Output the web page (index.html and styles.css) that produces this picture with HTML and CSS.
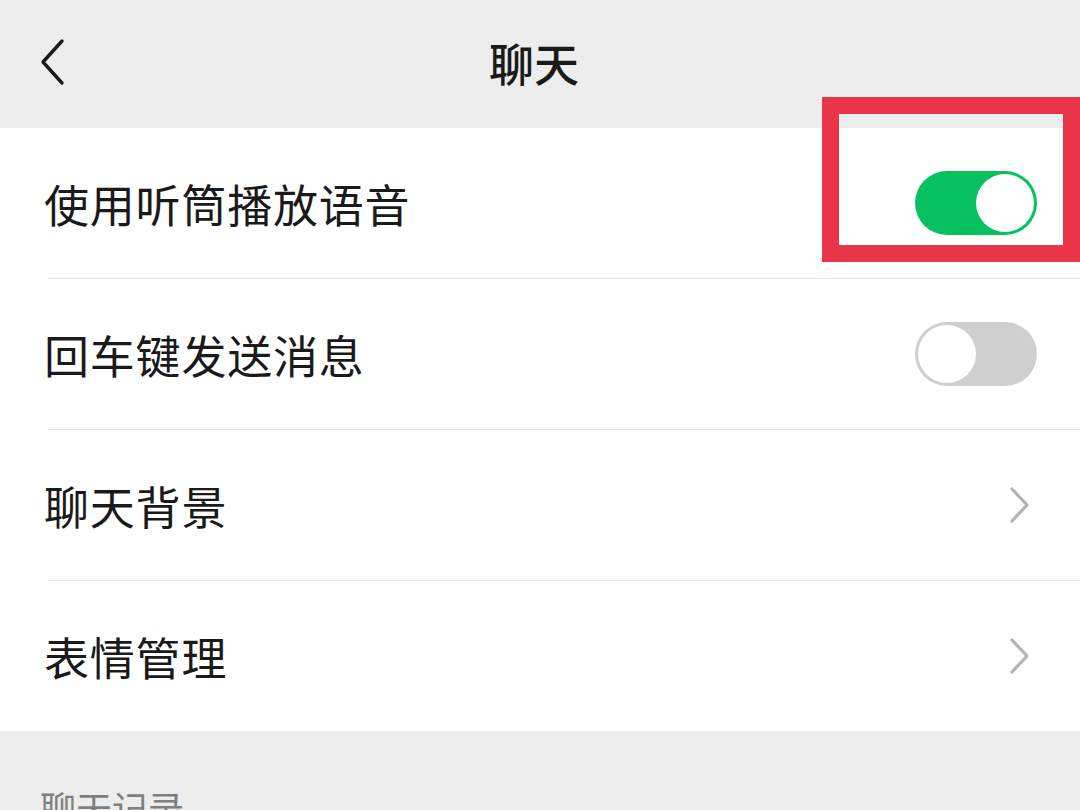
FILE: index.html
```html
<!DOCTYPE html>
<html lang="zh-CN">
<head>
<meta charset="utf-8">
<title>聊天</title>
<link rel="stylesheet" href="styles.css">
</head>
<body>
<div class="page">
  <header class="nav">
    <span class="back">
      <svg width="30" height="48" viewBox="0 0 30 48"><path d="M24 3 L5 24 L24 45" fill="none" stroke="#1a1a1a" stroke-width="3.4" stroke-linecap="round" stroke-linejoin="round"/></svg>
    </span>
    <h1 class="title">聊天</h1>
  </header>
  <ul class="list">
    <li class="row">
      <span class="label">使用听筒播放语音</span>
      <span class="switch on"><span class="knob"></span></span>
    </li>
    <li class="row">
      <span class="label">回车键发送消息</span>
      <span class="switch off"><span class="knob"></span></span>
    </li>
    <li class="row">
      <span class="label">聊天背景</span>
      <svg class="chev" width="22" height="38" viewBox="0 0 22 38"><path d="M3 3 L18 19 L3 35" fill="none" stroke="#b2b2b2" stroke-width="3.2" stroke-linecap="round" stroke-linejoin="round"/></svg>
    </li>
    <li class="row">
      <span class="label">表情管理</span>
      <svg class="chev" width="22" height="38" viewBox="0 0 22 38"><path d="M3 3 L18 19 L3 35" fill="none" stroke="#b2b2b2" stroke-width="3.2" stroke-linecap="round" stroke-linejoin="round"/></svg>
    </li>
  </ul>
  <div class="section-title">聊天记录</div>
  <div class="highlight"></div>
</div>
</body>
</html>
```

FILE: styles.css
```css
html, body {
  margin: 0;
  padding: 0;
}
body {
  width: 1080px;
  height: 810px;
  overflow: hidden;
  background: #ededed;
  font-family: "Noto Sans CJK SC", "Noto Sans", sans-serif;
  color: #1a1a1a;
}
.page {
  position: relative;
  width: 1080px;
  height: 810px;
}
.nav {
  height: 128px;
  display: flex;
  align-items: center;
  justify-content: center;
  position: relative;
  background: #ededed;
}
.back {
  position: absolute;
  left: 38px;
  top: 38px;
  display: flex;
}
.title {
  margin: -4px 0 0 -12px;
  font-size: 45px;
  font-weight: 500;
  line-height: 1;
}
.list {
  list-style: none;
  margin: 0;
  padding: 0;
  background: #fff;
}
.row {
  height: 150px;
  display: flex;
  align-items: center;
  justify-content: space-between;
  padding: 0 43px 0 44px;
  position: relative;
}
.row + .row {
  margin-top: 1px;
}
.row + .row::before {
  content: "";
  position: absolute;
  left: 48px;
  right: 0;
  top: -1px;
  height: 1px;
  background: #e6e6e6;
}
.label {
  font-size: 45px;
  line-height: 1;
  letter-spacing: 0.8px;
}
.switch {
  width: 122px;
  height: 64px;
  border-radius: 32px;
  box-sizing: border-box;
  display: flex;
  align-items: center;
  padding: 3px;
}
.switch .knob {
  width: 58px;
  height: 58px;
  border-radius: 50%;
  background: #fff;
}
.switch.on {
  background: #07c160;
  justify-content: flex-end;
}
.switch.off {
  background: #cfcfcf;
  justify-content: flex-start;
}
.chev {
  margin-right: 6px;
}
.section-title {
  padding: 58px 0 0 40px;
  font-size: 36px;
  line-height: 1;
  color: #7f7f7f;
}
.highlight {
  position: absolute;
  left: 822px;
  top: 97px;
  width: 258px;
  height: 165px;
  box-sizing: border-box;
  border: 17px solid #e8354a;
}
```
